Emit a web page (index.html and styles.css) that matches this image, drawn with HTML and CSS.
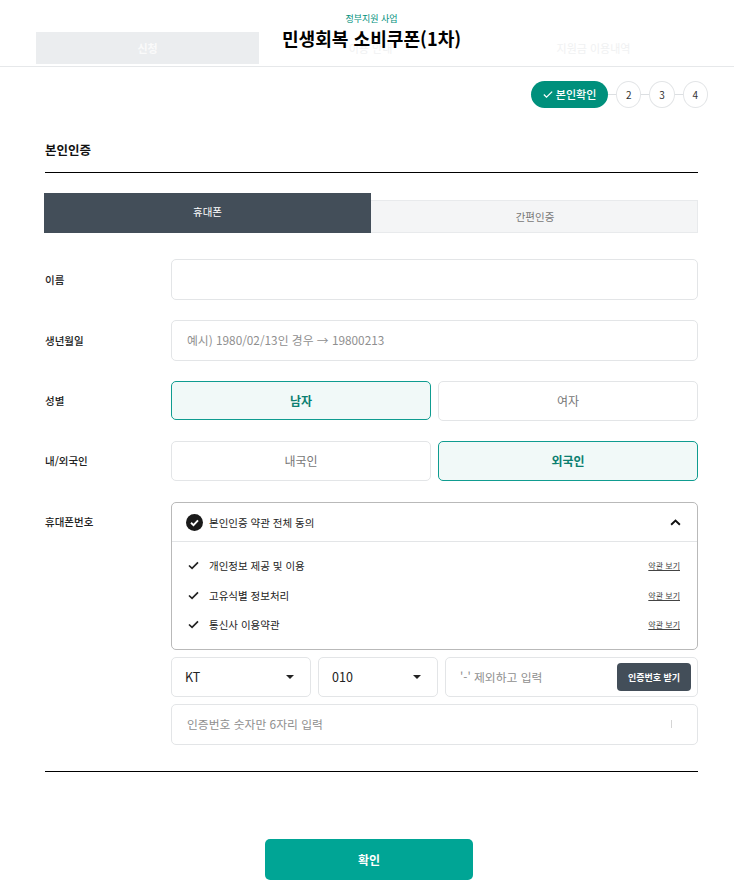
FILE: index.html
```html
<!DOCTYPE html>
<html lang="ko">
<head>
<meta charset="utf-8">
<title>민생회복 소비쿠폰(1차)</title>
<link rel="stylesheet" href="styles.css">
</head>
<body>
<header class="header">
  <nav class="nav">
    <a class="nav-item nav-active">신청</a>
    <a class="nav-item">이용 안내</a>
    <a class="nav-item">지원금 이용내역</a>
  </nav>
  <div class="brand">
    <p class="brand-sub">정부지원 사업</p>
    <h1 class="brand-title">민생회복 소비쿠폰(1차)</h1>
  </div>
</header>
<main class="main">
  <ol class="steps">
    <li class="step-current"><svg class="step-check" viewBox="0 0 12 10" width="10" height="9"><path d="M1 5l3.2 3.2L11 1.5" fill="none" stroke="#fff" stroke-width="1.5"/></svg>본인확인</li>
    <li class="step-link"></li>
    <li class="step">2</li>
    <li class="step-link"></li>
    <li class="step">3</li>
    <li class="step-link"></li>
    <li class="step">4</li>
  </ol>
  <h2 class="section-title">본인인증</h2>
  <div class="tabs">
    <button class="tab tab-active">휴대폰</button>
    <button class="tab">간편인증</button>
  </div>
  <div class="form">
    <div class="row">
      <div class="label">이름</div>
      <div class="field"><div class="box"></div></div>
    </div>
    <div class="row">
      <div class="label">생년월일</div>
      <div class="field"><div class="box placeholder">예시) 1980/02/13인 경우 → 19800213</div></div>
    </div>
    <div class="row">
      <div class="label">성별</div>
      <div class="field choice">
        <div class="box opt opt-on opt-first">남자</div>
        <div class="box opt">여자</div>
      </div>
    </div>
    <div class="row">
      <div class="label">내/외국인</div>
      <div class="field choice">
        <div class="box opt">내국인</div>
        <div class="box opt opt-on">외국인</div>
      </div>
    </div>
    <div class="row row-phone">
      <div class="label label-phone">휴대폰번호</div>
      <div class="field stack">
        <div class="terms">
          <div class="terms-head">
            <svg class="terms-all" viewBox="0 0 17 17" width="17" height="17"><circle cx="8.5" cy="8.5" r="8.5" fill="#1a1a1a"/><path d="M5 8.8l2.5 2.4L12 6.4" fill="none" stroke="#fff" stroke-width="1.9"/></svg>
            <span class="terms-head-text">본인인증 약관 전체 동의</span>
            <svg class="chev" viewBox="0 0 12 8" width="11" height="7"><path d="M1 6.5L6 1.8l5 4.7" fill="none" stroke="#111" stroke-width="2.2"/></svg>
          </div>
          <ul class="terms-list">
            <li class="term"><svg class="term-check" viewBox="0 0 12 10" width="11" height="9"><path d="M1 5l3.4 3.2L11 1.5" fill="none" stroke="#222" stroke-width="1.9"/></svg><span class="term-text">개인정보 제공 및 이용</span><a class="term-link">약관 보기</a></li>
            <li class="term"><svg class="term-check" viewBox="0 0 12 10" width="11" height="9"><path d="M1 5l3.4 3.2L11 1.5" fill="none" stroke="#222" stroke-width="1.9"/></svg><span class="term-text">고유식별 정보처리</span><a class="term-link">약관 보기</a></li>
            <li class="term"><svg class="term-check" viewBox="0 0 12 10" width="11" height="9"><path d="M1 5l3.4 3.2L11 1.5" fill="none" stroke="#222" stroke-width="1.9"/></svg><span class="term-text">통신사 이용약관</span><a class="term-link">약관 보기</a></li>
          </ul>
        </div>
        <div class="phone-line">
          <div class="box select select-carrier">KT<span class="caret"></span></div>
          <div class="box select select-prefix">010<span class="caret"></span></div>
          <div class="box phone-input"><span class="phone-ph">'-' 제외하고 입력</span><button class="send">인증번호 받기</button></div>
        </div>
        <div class="box placeholder code-line">인증번호 숫자만 6자리 입력<span class="cursor"></span></div>
      </div>
    </div>
  </div>
  <div class="foot">
    <button class="confirm">확인</button>
  </div>
</main>
</body>
</html>
```
FILE: styles.css
```css
* { box-sizing: border-box; }
html, body { margin: 0; padding: 0; }
body {
  background: #fff;
  color: #111;
  font-family: "Noto Sans CJK KR", "Noto Sans", sans-serif;
  overflow: hidden;
}
ul, ol { list-style: none; margin: 0; padding: 0; }
h1, h2, p { margin: 0; }
button { font-family: inherit; border: 0; cursor: pointer; }

.header {
  position: relative;
  height: 67px;
  border-bottom: 1px solid #e6e8ea;
  padding: 32px 0 0 36px;
}
.nav { display: flex; }
.nav-item {
  flex: none;
  width: 223px;
  height: 32px;
  display: flex;
  align-items: center;
  justify-content: center;
  font-size: 11px;
  color: #f0f1f2;
}
.nav-active { background: #ebedef; color: #fafafa; font-weight: 700; }
.brand {
  position: absolute;
  top: 12px;
  left: 9px;
  right: 0;
  text-align: center;
}
.brand-sub { font-size: 9px; line-height: 13px; color: #00907c; }
.brand-title { font-size: 18.1px; line-height: 26px; font-weight: 700; color: #000; margin-top: 0; }

.main { padding: 13px 36px 0 45px; }
.steps {
  display: flex;
  align-items: center;
  justify-content: flex-end;
  margin-right: -10px;
  height: 28px;
}
.step-current {
  width: 77px;
  height: 27px;
  border-radius: 14px;
  background: #00907c;
  color: #fff;
  font-size: 11px;
  font-weight: 500;
  display: flex;
  align-items: center;
  justify-content: center;
  gap: 3px;
}
.step-check { flex: none; }
.step-link { width: 7.8px; height: 1px; background: #dcdfe2; }
.step {
  width: 25.5px;
  height: 27px;
  border: 1px solid #e3e5e7;
  border-radius: 50%;
  font-size: 10px;
  color: #333;
  display: flex;
  align-items: center;
  justify-content: center;
}
.section-title {
  margin-top: 27px;
  height: 38px;
  border-bottom: 1px solid #000;
  font-size: 12.5px;
  line-height: 30px;
  font-weight: 700;
  width: 653px;
  padding-bottom: 8px;
}
.tabs {
  display: flex;
  align-items: flex-end;
  margin: 20px 0 0 -1px;
  width: 654px;
}
.tab {
  flex: none;
  width: 50%;
  height: 33px;
  background: #f4f5f6;
  border: 1px solid #e8eaec;
  border-left: 0;
  color: #777;
  font-size: 10.5px;
  padding: 0 0 0 2px;
}
.tab-active {
  height: 40px;
  background: #434e59;
  border: 0;
  color: #fff;
  padding: 0 0 3px;
}
.form { width: 653px; margin-top: 26px; display: flex; flex-direction: column; gap: 20px; }
.row { display: flex; align-items: center; }
.row-phone { align-items: flex-start; margin-top: 1px; }
.label { width: 126px; flex: none; font-size: 10.5px; font-weight: 500; color: #222; padding-bottom: 1px; }
.label-phone { padding-top: 12px; }
.field { flex: 1; min-width: 0; }
.box {
  height: 41px;
  border: 1px solid #e3e5e7;
  border-radius: 5px;
  background: #fff;
  font-size: 12px;
  display: flex;
  align-items: center;
}
.placeholder { padding: 0 15px 2px; color: #8f8f8f; font-size: 11.8px; }
.choice { display: flex; gap: 7px; }
.opt { flex: 1; height: 40px; justify-content: center; color: #777; padding-bottom: 1px; }
.opt-first { height: 39px; }
.opt-on {
  background: #f1f9f8;
  border-color: #0f9c90;
  color: #0b7f70;
  font-weight: 700;
}
.stack { display: flex; flex-direction: column; gap: 7px; }
.terms { border: 1px solid #b9b9b9; border-radius: 5px; height: 148px; }
.terms-head {
  height: 39px;
  border-bottom: 1px solid #e3e5e7;
  display: flex;
  align-items: center;
  padding: 0 16px 0 14px;
}
.terms-all { flex: none; }
.terms-head-text { margin-left: 6px; font-size: 10.5px; color: #222; flex: 1; }
.terms-list { padding-top: 9px; }
.term { height: 29.5px; display: flex; align-items: center; padding: 0 17px 0 16px; }
.term-check { flex: none; }
.term-text { margin-left: 10px; font-size: 10.5px; color: #222; flex: 1; }
.term-link { font-size: 8px; color: #444; text-decoration: underline; }
.phone-line { display: flex; gap: 7px; }
.select { height: 40px; position: relative; padding: 0 0 2px 13px; font-size: 12.5px; color: #222; }
.select-carrier { width: 140px; }
.select-prefix { width: 120px; }
.caret {
  position: absolute;
  top: 17px;
  right: 16px;
  border-left: 4px solid transparent;
  border-right: 4px solid transparent;
  border-top: 4px solid #222;
}
.phone-input { flex: 1; height: 40px; justify-content: space-between; padding: 0 6px 0 14px; }
.phone-ph { color: #8f8f8f; font-size: 11.8px; padding-bottom: 2px; }
.send {
  width: 74px;
  height: 28px;
  border-radius: 4px;
  background: #434e59;
  color: #fff;
  font-size: 9px;
  font-weight: 700;
  padding: 0;
}
.code-line { justify-content: space-between; padding-right: 25px; }
.cursor { width: 1px; height: 8px; background: #d5d5d5; }
.foot {
  width: 653px;
  margin-top: 26px;
  border-top: 1px solid #000;
  padding: 67px 5px 0 0;
  display: flex;
  justify-content: center;
}
.confirm {
  width: 208px;
  height: 41px;
  border-radius: 5px;
  background: #00a595;
  color: #fff;
  font-size: 12px;
  font-weight: 700;
}
```
